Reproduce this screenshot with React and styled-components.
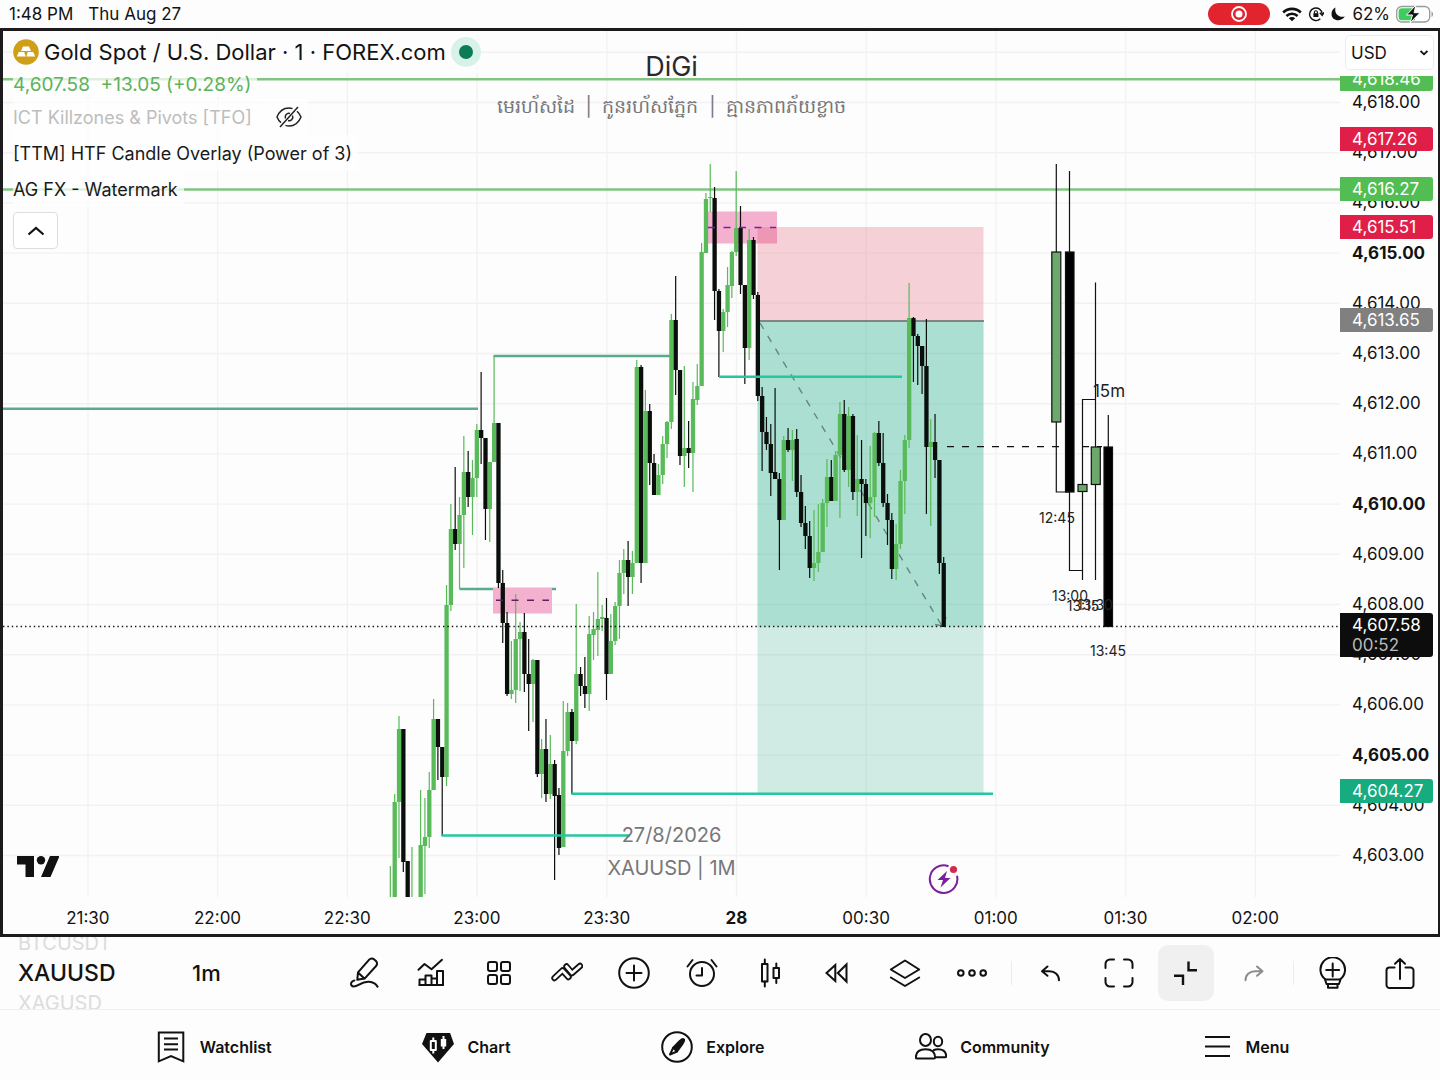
import styled, { createGlobalStyle, css } from "styled-components";

const GlobalStyle = createGlobalStyle`
  * {
    box-sizing: border-box;
  }
  body {
    margin: 0;
    background: #fdfdfd;
    color: #131313;
    font-family: Inter, "Noto Sans", "Liberation Sans", sans-serif;
  }
  button,
  select {
    font: inherit;
    color: inherit;
  }
`;

const UP = "#58ba58";
const DOWN = "#0b0f0c";

// minute from 23:00, high, low, body top, body bottom, direction
const candles = [
  [-20, 866, 897, 897, 897, 1],
  [-19, 794, 897, 802, 897, 1],
  [-18, 716, 858, 729, 802, 1],
  [-17, 729, 872, 729, 862, 0],
  [-16, 861, 897, 861, 897, 0],
  [-15, 847, 897, 897, 897, 1],
  [-13, 790, 897, 845, 897, 1],
  [-12, 798, 894, 837, 846, 1],
  [-11, 772, 848, 790, 837, 1],
  [-10, 699, 790, 719, 790, 1],
  [-9, 719, 780, 719, 747, 0],
  [-8, 747, 836, 747, 777, 0],
  [-7, 585, 786, 605, 777, 1],
  [-6, 504, 611, 529, 605, 1],
  [-5, 467, 550, 529, 544, 0],
  [-4, 497, 589, 515, 544, 1],
  [-3, 436, 568, 472, 515, 1],
  [-2, 451, 507, 472, 497, 0],
  [-1, 460, 535, 478, 497, 1],
  [0, 424, 497, 430, 478, 1],
  [1, 372, 464, 430, 438, 0],
  [2, 438, 540, 438, 509, 0],
  [3, 462, 542, 462, 509, 1],
  [4, 356, 462, 423, 462, 1],
  [5, 423, 588, 423, 583, 0],
  [6, 570, 643, 583, 623, 0],
  [7, 612, 696, 623, 694, 0],
  [8, 641, 699, 690, 694, 1],
  [9, 594, 703, 639, 690, 1],
  [10, 622, 691, 632, 639, 1],
  [11, 613, 692, 632, 674, 0],
  [12, 639, 731, 674, 684, 0],
  [13, 659, 722, 660, 684, 1],
  [14, 660, 777, 660, 774, 0],
  [15, 739, 798, 749, 774, 1],
  [16, 719, 802, 749, 794, 0],
  [17, 735, 799, 764, 794, 1],
  [18, 760, 880, 764, 796, 0],
  [19, 788, 855, 795, 848, 0],
  [20, 701, 847, 751, 847, 1],
  [21, 703, 756, 712, 751, 1],
  [22, 709, 794, 712, 741, 0],
  [23, 604, 744, 674, 741, 1],
  [24, 667, 696, 674, 686, 0],
  [25, 657, 708, 686, 694, 0],
  [26, 616, 711, 634, 694, 1],
  [27, 612, 660, 629, 635, 1],
  [28, 572, 656, 619, 630, 1],
  [29, 605, 631, 617, 619, 1],
  [30, 598, 700, 618, 674, 0],
  [31, 614, 674, 641, 674, 1],
  [32, 602, 645, 606, 641, 1],
  [33, 560, 639, 573, 606, 1],
  [34, 549, 594, 560, 573, 1],
  [35, 541, 606, 560, 577, 0],
  [36, 551, 594, 563, 577, 1],
  [37, 360, 563, 367, 563, 1],
  [38, 365, 583, 367, 563, 0],
  [39, 390, 563, 411, 563, 1],
  [40, 404, 485, 411, 463, 0],
  [41, 454, 495, 463, 495, 0],
  [42, 464, 495, 475, 495, 1],
  [43, 436, 484, 444, 475, 1],
  [44, 421, 458, 422, 444, 1],
  [45, 314, 429, 320, 422, 1],
  [46, 276, 395, 320, 370, 0],
  [47, 370, 465, 370, 456, 0],
  [48, 366, 487, 448, 456, 1],
  [49, 421, 468, 448, 453, 0],
  [50, 382, 492, 399, 453, 1],
  [51, 364, 405, 386, 400, 1],
  [52, 243, 386, 252, 386, 1],
  [53, 193, 253, 199, 253, 1],
  [54, 164, 212, 197, 198, 1],
  [55, 187, 320, 198, 291, 0],
  [56, 289, 377, 291, 331, 0],
  [57, 309, 352, 312, 331, 1],
  [58, 267, 327, 285, 312, 1],
  [59, 251, 298, 252, 286, 1],
  [60, 171, 256, 228, 252, 1],
  [61, 206, 294, 228, 285, 0],
  [62, 285, 384, 285, 348, 0],
  [63, 229, 360, 240, 348, 1],
  [64, 237, 299, 240, 295, 0],
  [65, 292, 401, 295, 396, 0],
  [66, 387, 471, 396, 432, 0],
  [67, 417, 450, 432, 444, 0],
  [68, 424, 496, 444, 473, 0],
  [69, 388, 479, 472, 479, 0],
  [70, 473, 570, 479, 520, 0],
  [71, 436, 520, 440, 520, 1],
  [72, 428, 452, 440, 450, 0],
  [73, 430, 481, 440, 450, 1],
  [74, 429, 497, 439, 492, 0],
  [75, 475, 527, 492, 523, 0],
  [76, 506, 549, 523, 536, 0],
  [77, 521, 578, 536, 568, 0],
  [78, 510, 581, 563, 568, 1],
  [79, 504, 572, 552, 563, 1],
  [80, 499, 552, 503, 552, 1],
  [81, 459, 527, 477, 503, 1],
  [82, 460, 501, 477, 501, 0],
  [83, 451, 501, 455, 501, 1],
  [84, 402, 518, 414, 455, 1],
  [85, 400, 472, 414, 470, 0],
  [86, 407, 487, 416, 470, 1],
  [87, 414, 500, 416, 492, 0],
  [88, 435, 516, 479, 492, 1],
  [89, 440, 558, 479, 484, 0],
  [90, 479, 536, 484, 503, 0],
  [91, 446, 538, 497, 503, 1],
  [92, 432, 517, 433, 497, 1],
  [93, 421, 466, 433, 463, 0],
  [94, 433, 507, 463, 503, 0],
  [95, 494, 545, 503, 520, 0],
  [96, 513, 579, 520, 569, 0],
  [97, 524, 580, 544, 569, 1],
  [98, 470, 549, 481, 544, 1],
  [99, 435, 514, 440, 481, 1],
  [100, 283, 448, 318, 440, 1],
  [101, 317, 382, 318, 336, 0],
  [102, 334, 385, 336, 346, 0],
  [103, 346, 394, 346, 366, 0],
  [104, 319, 514, 366, 447, 0],
  [105, 419, 526, 442, 447, 1],
  [106, 414, 478, 442, 460, 0],
  [107, 460, 574, 460, 563, 0],
  [108, 557, 627, 563, 627, 0],
];

const prices = Array.from({ length: 16 }, (_, i) => 4618 - i);
const times = ["21:30", "22:00", "22:30", "23:00", "23:30", "28", "00:30", "01:00", "01:30", "02:00"];

const tags = [
  { price: 4618.46, color: "#52bd52" },
  { price: 4617.26, color: "#e01f48" },
  { price: 4616.27, color: "#52bd52" },
  { price: 4615.51, color: "#e01f48" },
  { price: 4613.65, color: "#808080" },
  { price: 4607.58, color: "#0d0d0d", countdown: "00:52" },
  { price: 4604.27, color: "#17ab80" },
];

const htfLabels = [
  { text: "12:45", x: 1057, y: 517 },
  { text: "13:00", x: 1070, y: 595 },
  { text: "13:15", x: 1083, y: 605 },
  { text: "13:30", x: 1095, y: 604 },
  { text: "13:45", x: 1108, y: 650 },
];

// drawing area, in the units of the chart svg
const PLOT = { x: 3, y: 31, w: 1337, h: 866 };

const fmt = (n) => n.toLocaleString("en-US", { minimumFractionDigits: 2, maximumFractionDigits: 2 });
const priceY = (p) => 102.5 + (4618 - p) * 50.2;
const minuteX = (m) => 476.8 + m * 4.323;
const leftOf = (x) => `${((x - PLOT.x) / PLOT.w) * 100}%`;
const topOf = (y) => `${((y - PLOT.y) / PLOT.h) * 100}%`;

const Icon = ({ children, size = 32, width = 2 }) => (
  <svg
    width={size}
    height={size}
    viewBox="0 0 32 32"
    fill="none"
    stroke="currentColor"
    strokeWidth={width}
    strokeLinecap="round"
    strokeLinejoin="round"
    aria-hidden="true"
  >
    {children}
  </svg>
);

const tools = [
  {
    label: "Draw",
    icon: (
      <>
        <path d="M9.3 22.8 10 15.4 21.2 2.6a3.5 3.5 0 0 1 5-.2l1.800 1.700a3.500 3.500 0 0 1 .1 4.900L16.600 21.600z M10 15.600l6.400 6" />
        <path d="M6.400 23.400C3.400 24 2.400 26.600 3.500 28.400c1.200 1.800 4.400 1 7.500-.8 6.500-3.800 14.500-4.200 18.500 2" />
      </>
    ),
  },
  {
    label: "Indicators",
    icon: (
      <>
        <path d="M3.5 12.800 9.500 7l7 5.200L27 2.800" />
        <path d="M4.500 28v-5.500h6V28M10.500 28v-9.500h6V28M16.500 21.500h5.500V28M22 28V14h6v14z" />
        <path d="M4.500 28H28" />
      </>
    ),
  },
  {
    label: "Layouts",
    icon: (
      <>
        <rect x="5" y="5" width="9" height="9" rx="2" />
        <rect x="18" y="5" width="9" height="9" rx="2" />
        <rect x="5" y="18" width="9" height="9" rx="2" />
        <rect x="18" y="18" width="9" height="9" rx="2" />
      </>
    ),
  },
  {
    label: "Patterns",
    icon: (
      <>
        <path d="M3.500 21 11.500 13.500 17.500 20" strokeWidth="6.400" />
        <path d="M3.500 21 11.500 13.500 17.500 20" strokeWidth="2.800" stroke="#fdfdfd" />
        <path d="M15.500 9.500 21 16 29 9" strokeWidth="6.400" />
        <path d="M15.500 9.500 21 16 29 9" strokeWidth="2.800" stroke="#fdfdfd" />
      </>
    ),
  },
  {
    label: "Add",
    icon: (
      <>
        <circle cx="16" cy="16" r="14.800" />
        <path d="M16 8.500v15M8.500 16h15" />
      </>
    ),
  },
  {
    label: "Alert",
    icon: (
      <>
        <circle cx="16" cy="17" r="12" />
        <path d="M16 11v7.500h-5.500M1.500 9.500l5-6.500M30.500 9.500l-5-6.500" />
      </>
    ),
  },
  {
    label: "Chart type",
    icon: (
      <>
        <rect x="8" y="7" width="5.500" height="17.500" />
        <path d="M10.800 2.500V7M10.800 24.500v5M22.300 6.500V11M22.300 21v5" />
        <rect x="19.500" y="11" width="5.500" height="10" />
      </>
    ),
  },
  {
    label: "Replay",
    icon: <path d="M5.500 16 14.300 8v16zM16.800 16l8.700-8.500v17z" strokeLinejoin="miter" />,
  },
  {
    label: "Object tree",
    icon: <path d="M1.800 12.500 16 3.500l14.200 9L16 21zM1.800 20.500l14.200 8.500 14.200-8.500" />,
  },
  {
    label: "More",
    icon: (
      <>
        <circle cx="4.800" cy="16" r="2.800" />
        <circle cx="16" cy="16" r="2.800" />
        <circle cx="27.200" cy="16" r="2.800" />
      </>
    ),
  },
];

const viewTools = [
  { label: "Undo", icon: <path d="M12.500 9.500 7 14.200l5.500 4.600M7 14.200h7.500c5.500 0 9.500 3.600 9.500 9" /> },
  {
    label: "Fullscreen",
    icon: <path d="M2.500 11V7a4.500 4.500 0 0 1 4.500-4.500h4M21 2.500h4A4.500 4.500 0 0 1 29.500 7v4M29.500 21v4a4.500 4.500 0 0 1-4.500 4.500h-4M11 29.500H7A4.500 4.500 0 0 1 2.500 25v-4" />,
  },
  {
    label: "Exit focus",
    active: true,
    icon: <path d="M18.500 4.500v8.700H27M4 18.800h9V28" strokeLinecap="butt" strokeLinejoin="miter" strokeWidth="2.400" />,
  },
  {
    label: "Redo",
    muted: true,
    icon: <path d="M19 9.500 24.500 14.200l-5.500 4.600M24.500 14.200H17c-5.500 0-9.500 3.600-9.500 9" />,
  },
];

const shareTools = [
  {
    label: "Publish idea",
    icon: (
      <>
        <path d="M8.500 22.500a12.300 12.300 0 1 1 14.500 0M15.700 6.500v13M9.200 13h13" />
        <path d="M8 22.500h15.500l-1.500 4.500H9.500zM11 27h9.500v3.800H11z" />
      </>
    ),
  },
  {
    label: "Share",
    icon: <path d="M10.500 10.500h-5a3 3 0 0 0-3 3V28a3 3 0 0 0 3 3h21a3 3 0 0 0 3-3V13.500a3 3 0 0 0-3-3h-5M16 22V2M11 6.800 16 2l5 4.800" />,
  },
];

const tabs = [
  {
    label: "Watchlist",
    icon: (
      <>
        <path d="M3.800 1.500h24.500v28.800L16 25 3.800 30.300z" strokeLinejoin="miter" />
        <path d="M9 7.500h14M9 13.300h14M9 18.500h14" strokeLinecap="butt" />
      </>
    ),
  },
  {
    label: "Chart",
    icon: (
      <>
        <path d="M4.500 2h23.600L32 13 16 31.500 0 13z" fill="currentColor" stroke="none" />
        <path d="M8.800 10h5v9h-5zM11.300 6.500V10M11.300 19v3.500M21.500 5v13" stroke="#fff" strokeLinecap="butt" />
        <path d="M18.800 8h5.400v7.500h-5.400z" fill="#fff" stroke="none" />
      </>
    ),
  },
  {
    label: "Explore",
    icon: (
      <>
        <circle cx="16" cy="16" r="14.800" />
        <path d="M22.800 8.300c.8.600.6 1.500-1 4L16 20.500l-3.800-3.800 6.300-6.500c2.200-2 3.500-2.500 4.300-1.900z" fill="currentColor" />
        <path d="M12.200 16.700 9 23.500 16 20.500" />
      </>
    ),
  },
  {
    label: "Community",
    icon: (
      <>
        <ellipse cx="10.500" cy="9" rx="5.500" ry="6" />
        <ellipse cx="23" cy="10.500" rx="4.200" ry="4.800" />
        <path d="M.8 26.300C1 21 4.500 18.300 10.500 18.300S20 21 20.200 26.300c0 .8-.5 1.200-1.200 1.200H2c-.7 0-1.200-.4-1.200-1.200zM19 19c1.200-.5 2.500-.7 4-.7 5 0 8 2.500 8.200 6.800 0 .8-.4 1.200-1.200 1.200h-9.500" />
      </>
    ),
  },
  { label: "Menu", icon: <path d="M5 6h25M5 15.500h25M5 25h25" strokeLinecap="butt" /> },
];

const Candle = ({ data: [m, high, low, top, bottom, up] }) => {
  const x = minuteX(m);
  const color = up ? UP : DOWN;
  return (
    <g fill={color}>
      <rect x={x - 0.6} y={high} width="1.2" height={low - high} />
      {top < PLOT.y + PLOT.h && <rect x={x - 2.1} y={top} width="4.3" height={bottom - top} />}
    </g>
  );
};

const ChartDrawing = () => (
  <Drawing viewBox={`${PLOT.x} ${PLOT.y} ${PLOT.w} ${PLOT.h}`} preserveAspectRatio="none" aria-label="XAUUSD price chart">
    <g stroke="#f2f2f3" strokeWidth="1.400">
      {times.map((t, i) => (
        <line key={t} x1={88 + i * 129.7} x2={88 + i * 129.7} y1="31" y2="897" />
      ))}
      {[4619, ...prices].map((p) => (
        <line key={p} x1="3" x2="1340" y1={priceY(p)} y2={priceY(p)} />
      ))}
    </g>

    {/* order blocks */}
    <rect x="706" y="211.500" width="71" height="32" fill="#f4b0cf" />
    <rect x="493" y="588" width="59" height="25.500" fill="#f4b0cf" />

    {/* short position */}
    <rect x="757.500" y="227" width="226" height="94" fill="rgba(223,71,95,.24)" />
    <rect x="757.500" y="321" width="226" height="473" fill="rgba(8,162,118,.19)" />
    <rect x="757.500" y="321" width="226" height="305.500" fill="rgba(8,172,126,.18)" />
    <line x1="757" x2="984" y1="321" y2="321" stroke="#5f6b68" strokeWidth="1.300" />
    <path d="M760 323 942 626" stroke="#66867c" strokeWidth="1.400" strokeDasharray="7 8" fill="none" />
    <path d="M935 624.500 943 626 946 617" stroke="#66867c" strokeWidth="1.400" fill="none" />

    <line x1="3" x2="1340" y1="79.300" y2="79.300" stroke="#82c482" strokeWidth="2.600" />
    <line x1="3" x2="1340" y1="189.500" y2="189.500" stroke="#82c482" strokeWidth="2.600" />
    <g stroke="#58ab8c" strokeWidth="2.500">
      <line x1="3" x2="478" y1="408.700" y2="408.700" />
      <line x1="493.500" x2="671" y1="356" y2="356" />
      <line x1="459.500" x2="556" y1="589" y2="589" />
    </g>
    <rect x="493" y="588" width="59" height="3" fill="#f4b0cf" />

    {candles.map((c) => (
      <Candle key={c[0]} data={c} />
    ))}

    <g stroke="#25c6a0" strokeWidth="2.600">
      <line x1="719" x2="902" y1="376.700" y2="376.700" />
      <line x1="571.500" x2="993" y1="793.700" y2="793.700" />
      <line x1="441.500" x2="630" y1="835.500" y2="835.500" />
    </g>
    <g stroke="#7a1fa0" strokeWidth="1.600" strokeDasharray="7 8.500">
      <line x1="708" x2="776" y1="227.500" y2="227.500" />
      <line x1="496" x2="549" y1="600.300" y2="600.300" stroke="#5d2358" />
    </g>

    {/* 15m candles */}
    <g stroke="#111" strokeWidth="1.200" fill="none">
      <line x1="947" x2="1102" y1="446.700" y2="446.700" strokeDasharray="7 8" />
      <path d="M1056.300 164V252M1056.300 422v70h13M1069.500 171V252M1069.500 492v78.500h13" />
      <path d="M1095.500 399.500h-13V580M1095.500 282.500V580M1108.300 415v32" />
      <rect x="1051.800" y="252" width="9" height="170" fill="#6ca76c" />
      <rect x="1065.500" y="252" width="8.500" height="240" fill="#000" />
      <rect x="1078" y="484.500" width="9" height="7" fill="#6ca76c" />
      <rect x="1091.300" y="447" width="9" height="37.500" fill="#6ca76c" />
      <rect x="1104" y="447" width="8.500" height="179.500" fill="#000" />
    </g>
    <line x1="3" x2="1340" y1="626.500" y2="626.500" stroke="#111" strokeWidth="1.400" strokeDasharray="1.400 3" />
  </Drawing>
);

const StatusIcons = () => (
  <StatusGroup>
    <RecordPill>
      <svg width="18" height="18" viewBox="0 0 18 18" fill="none" aria-hidden="true">
        <circle cx="9" cy="9" r="7" stroke="#fff" strokeWidth="1.800" />
        <circle cx="9" cy="9" r="3.500" fill="#fff" />
      </svg>
    </RecordPill>
    <svg width="20" height="15" viewBox="0 0 20 15" fill="none" stroke="#111" strokeWidth="2.600" aria-hidden="true">
      <path d="M1.200 5.500a12.500 12.500 0 0 1 17.600 0M4.400 9a8 8 0 0 1 11.200 0" />
      <path d="M10 14.300 6.800 11.200a4.600 4.600 0 0 1 6.400 0z" fill="#111" stroke="none" />
    </svg>
    <svg width="16" height="16" viewBox="0 0 16 16" fill="none" stroke="#111" strokeWidth="1.400" aria-hidden="true">
      <path d="M12.300 12.800A6.300 6.300 0 1 1 14.200 8" />
      <path d="M11.800 6.800 14.200 9.300 16 6.300" />
      <rect x="5.400" y="7.200" width="5" height="3.800" fill="#111" stroke="none" />
      <path d="M6.400 7.500V6.200a1.500 1.500 0 0 1 3 0v1.300" strokeWidth="1.100" />
    </svg>
    <svg width="16" height="16" viewBox="0 0 16 16" fill="#111" aria-hidden="true">
      <path d="M5.500 1.500C4 7.500 8.500 12 14.800 10.500 11 16.500 1.500 15 1.500 8c0-3 1.600-5.400 4-6.500z" />
    </svg>
    <span>62%</span>
    <svg width="38" height="18" viewBox="0 0 38 18" aria-hidden="true">
      <rect x=".7" y="1.500" width="33" height="15.500" rx="5" fill="#fff" stroke="#9a9a9a" strokeWidth="1.300" />
      <path d="M6 3.300h13v12H6a3.400 3.400 0 0 1-3.400-3.400V6.700A3.400 3.400 0 0 1 6 3.300z" fill="#3ecb5f" />
      <path d="M35.500 6.500c2 .8 2 4.700 0 5.500z" fill="#9a9a9a" />
      <path d="M20 0 10.500 10h6L14 18 24 7.700h-6z" fill="#111" stroke="#fff" strokeWidth="1" />
    </svg>
  </StatusGroup>
);

const Tools = ({ items }) =>
  items.map((t) => (
    <ToolSlot key={t.label}>
      <ToolButton aria-label={t.label} $active={t.active} $muted={t.muted}>
        <Icon>{t.icon}</Icon>
      </ToolButton>
    </ToolSlot>
  ));

const App = () => {
  return (
    <Page>
      <GlobalStyle />
      <StatusBar>
        <StatusGroup $wide>
          <span>1:48 PM</span>
          <span>Thu Aug 27</span>
        </StatusGroup>
        <StatusIcons />
      </StatusBar>

      <ChartFrame>
        <Plot>
          <ChartDrawing />
          <Watermark>
            <strong>DiGi</strong>
            <span>មេរហ័សដៃ&nbsp; |&nbsp; កូនរហ័សភ្នែក&nbsp; |&nbsp; គ្មានភាពភ័យខ្លាច</span>
          </Watermark>
          <Watermark $bottom>
            <span>27/8/2026</span>
            <span>XAUUSD | 1M</span>
          </Watermark>
          {htfLabels.map((l) => (
            <HtfLabel key={l.text} style={{ left: leftOf(l.x), top: topOf(l.y) }}>
              {l.text}
            </HtfLabel>
          ))}
          <HtfLabel $large style={{ left: leftOf(1109), top: topOf(391) }}>
            15m
          </HtfLabel>

          <Legend>
            <TitleRow>
              <svg width="26" height="26" viewBox="0 0 26 26" aria-hidden="true">
                <circle cx="13" cy="13" r="12.800" fill="#cf9f18" />
                <path
                  d="M10 7.500h6l2 4.500H8zM5.800 13h5.400l1.500 4.500H3.800zM14.800 13h5.400l2 4.500h-8.900z"
                  fill="#fff"
                />
              </svg>
              <h1>Gold Spot / U.S. Dollar · 1 · FOREX.com</h1>
              <MarketDot />
            </TitleRow>
            <PriceRow>
              <span>4,607.58&nbsp; +13.05 (+0.28%)</span>
            </PriceRow>
            <StudyRow $muted>
              <span>ICT Killzones &amp; Pivots [TFO]</span>
              <svg width="26" height="22" viewBox="0 0 26 22" fill="none" stroke="#222" strokeWidth="1.500" aria-hidden="true">
                <path d="M16.500 2.600A12 12 0 0 0 13 2C7 2 3 6 1 11c.9 2.200 2.200 4.200 4 5.700M9.500 19.400c1.100.4 2.300.6 3.500.6 6 0 10-4 12-9-.9-2.200-2.300-4.300-4-5.800" />
                <path d="M4 21 22 1M9.500 12.500a3.700 3.700 0 0 1 4.500-5M16.500 9.500a3.700 3.700 0 0 1-4.500 5" />
              </svg>
            </StudyRow>
            <StudyRow>
              <span>[TTM] HTF Candle Overlay (Power of 3)</span>
            </StudyRow>
            <StudyRow>
              <span>AG FX - Watermark</span>
            </StudyRow>
            <CollapseButton aria-label="Hide indicator legend">
              <svg width="18" height="10" viewBox="0 0 18 10" fill="none" stroke="#111" strokeWidth="2.200" aria-hidden="true">
                <path d="M1.500 8.500 9 2l7.500 6.500" />
              </svg>
            </CollapseButton>
          </Legend>

          <Logo width="42" height="21" viewBox="0 0 42 21" aria-label="TradingView">
            <path d="M0 0h17v21H8.500V8.500H0zM33 0h9.500L33.500 21H24z" />
            <circle cx="24" cy="4.200" r="4.200" />
          </Logo>
          <EventButton aria-label="Upcoming event" style={{ left: leftOf(minuteX(108)) }}>
            <svg width="32" height="32" viewBox="0 0 32 32" fill="none" aria-hidden="true">
              <path d="M20.500 3.200A13.800 13.800 0 1 0 29 12.800" stroke="#7b1f9c" strokeWidth="2" />
              <path d="M19 8 9.500 17H15l-2.500 7.500L22.500 15H17z" fill="#7b1f9c" />
              <circle cx="25.500" cy="6.500" r="3.600" fill="#d02b4b" />
            </svg>
          </EventButton>
        </Plot>

        <PriceAxis>
          <CurrencyBox>
            <select aria-label="Currency" defaultValue="USD">
              <option>USD</option>
              <option>EUR</option>
            </select>
            <svg width="8" height="6" viewBox="0 0 8 6" fill="none" stroke="#111" strokeWidth="1.800" aria-hidden="true">
              <path d="M.6 1 4 4.300 7.400 1" />
            </svg>
          </CurrencyBox>
          <Scale>
            <ScaleInner>
              {prices.map((p) => (
                <Tick key={p} $bold={p % 5 === 0}>
                  {fmt(p)}
                </Tick>
              ))}
              {tags.map((t) => (
                <PriceTag key={t.price} $color={t.color} style={{ top: `${((4618.5 - t.price) / 16) * 100}%` }}>
                  {fmt(t.price)}
                  {t.countdown && <small>{t.countdown}</small>}
                </PriceTag>
              ))}
            </ScaleInner>
          </Scale>
        </PriceAxis>

        <TimeAxis>
          {times.map((t) => (
            <TimeTick key={t} $bold={t === "28"}>
              {t}
            </TimeTick>
          ))}
        </TimeAxis>
      </ChartFrame>

      <Toolbar>
        <SymbolWheel>
          <span>BTCUSDT</span>
          <strong>XAUUSD</strong>
          <span>XAGUSD</span>
        </SymbolWheel>
        <Interval>1m</Interval>
        <Tools items={tools} />
        <Separator />
        <Tools items={viewTools} />
        <Separator />
        <Tools items={shareTools} />
      </Toolbar>

      <TabBar>
        {tabs.map((t) => (
          <Tab key={t.label} href={`#${t.label.toLowerCase()}`}>
            <Icon>{t.icon}</Icon>
            {t.label}
          </Tab>
        ))}
      </TabBar>
    </Page>
  );
};

const Page = styled.div`
  display: flex;
  flex-direction: column;
  height: 100vh;
  min-height: 640px;
  background: #fdfdfd;
`;

const StatusBar = styled.header`
  display: flex;
  flex: none;
  justify-content: space-between;
  align-items: center;
  height: 28px;
  padding: 0 6px 0 9px;
  font-size: 17px;
`;

const StatusGroup = styled.div`
  display: flex;
  align-items: center;
  gap: ${(props) => (props.$wide ? "15px" : "6px")};
`;

const RecordPill = styled.div`
  display: flex;
  justify-content: center;
  align-items: center;
  width: 62px;
  height: 22px;
  margin-right: 6px;
  border-radius: 11px;
  background: #e2242f;
`;

const ChartFrame = styled.main`
  display: grid;
  flex: 1;
  grid-template-columns: 1fr 98px;
  grid-template-rows: 1fr 37px;
  min-height: 0;
  border: 3px solid #1d1b1e;
  border-right-width: 2px;
`;

const Plot = styled.section`
  position: relative;
  min-width: 0;
  min-height: 0;
  overflow: hidden;
`;

const Drawing = styled.svg`
  position: absolute;
  inset: 0;
  width: 100%;
  height: 100%;
`;

const Watermark = styled.div`
  position: absolute;
  left: 0;
  right: 0;
  display: flex;
  flex-direction: column;
  align-items: center;
  color: #77777a;
  font-size: 20px;
  line-height: 33px;
  ${(props) =>
    props.$bottom
      ? css`
          bottom: 12px;
        `
      : css`
          top: 16px;
          font-size: 19px;
          line-height: 40px;
        `}
  strong {
    color: #2a2a2e;
    font-size: 27px;
    font-weight: 400;
  }
`;

const HtfLabel = styled.span`
  position: absolute;
  transform: translate(-50%, -50%);
  color: #222;
  font-size: ${(props) => (props.$large ? "17px" : "14px")};
`;

const Legend = styled.div`
  position: relative;
  display: flex;
  flex-direction: column;
  align-items: flex-start;
  padding-left: 10px;
`;

const TitleRow = styled.div`
  display: flex;
  align-items: center;
  height: 42px;
  gap: 5px;
  background: rgba(253, 253, 253, 0.8);
  h1 {
    margin: 0;
    font-size: 22px;
    font-weight: 400;
  }
`;

const MarketDot = styled.i`
  width: 30px;
  height: 30px;
  border: 8px solid #d9f2e9;
  border-radius: 50%;
  background: #0d7a58;
`;

const PriceRow = styled.div`
  height: 24px;
  margin-bottom: 2px;
  padding-right: 6px;
  background: rgba(253, 253, 253, 0.75);
  color: #5bb35b;
  font-size: 19px;
  line-height: 24px;
`;

const StudyRow = styled.div`
  display: flex;
  align-items: center;
  gap: 24px;
  height: 36px;
  padding-right: 6px;
  background: rgba(253, 253, 253, 0.75);
  color: ${(props) => (props.$muted ? "#bdbdbd" : "#1a1a1a")};
  font-size: 18px;
`;

const CollapseButton = styled.button`
  display: flex;
  justify-content: center;
  align-items: center;
  width: 45px;
  height: 37px;
  margin-top: 5px;
  border: 1px solid #dcdde2;
  border-radius: 4px;
  background: #fff;
`;

const Logo = styled.svg`
  position: absolute;
  left: 14px;
  bottom: 20px;
  fill: #111;
`;

const EventButton = styled.button`
  position: absolute;
  bottom: 2px;
  width: 32px;
  height: 32px;
  margin-left: -16px;
  padding: 0;
  border: none;
  background: none;
`;

const PriceAxis = styled.aside`
  display: flex;
  flex-direction: column;
  min-height: 0;
`;

const CurrencyBox = styled.div`
  display: flex;
  flex: none;
  align-items: center;
  height: 35px;
  margin: 4px 4px 6px 5px;
  padding: 0 5px;
  border: 1px solid #ececee;
  border-radius: 5px;
  background: #fff;
  select {
    flex: 1;
    min-width: 0;
    padding: 0;
    border: none;
    appearance: none;
    background: none;
    font-size: 17px;
  }
`;

const Scale = styled.div`
  display: flex;
  flex: 1;
  min-height: 0;
  padding: 1px 5px 17px 0;
  overflow: hidden;
`;

const ScaleInner = styled.div`
  position: relative;
  display: flex;
  flex: 1;
  flex-direction: column;
`;

const Tick = styled.div`
  display: flex;
  flex: 1;
  align-items: center;
  min-height: 0;
  padding-left: 12px;
  font-size: 17px;
  font-weight: ${(props) => (props.$bold ? 700 : 400)};
`;

const PriceTag = styled.div`
  position: absolute;
  left: 0;
  right: 0;
  margin-top: -12px;
  padding: 2px 0 2px 12px;
  border-radius: 0 3px 3px 0;
  background: ${(props) => props.$color};
  color: #fff;
  font-size: 17px;
  line-height: 20px;
  small {
    display: block;
    color: #b9b9b9;
    font-size: 17px;
  }
`;

const TimeAxis = styled.div`
  display: flex;
  align-items: center;
  padding: 0 20px;
`;

const TimeTick = styled.span`
  flex: 1;
  padding-top: 4px;
  font-size: 17px;
  font-weight: ${(props) => (props.$bold ? 700 : 400)};
  text-align: center;
`;

const Toolbar = styled.div`
  display: flex;
  flex: none;
  align-items: center;
  height: 73px;
  padding: 0 6px 0 18px;
  border-bottom: 1px solid #efefef;
`;

const SymbolWheel = styled.div`
  display: flex;
  flex: none;
  flex-direction: column;
  justify-content: center;
  width: 174px;
  height: 72px;
  overflow: hidden;
  line-height: 30px;
  span {
    color: #dcdcdc;
    font-size: 20px;
  }
  strong {
    font-size: 23px;
    font-weight: 500;
  }
`;

const Interval = styled.button`
  flex: none;
  width: 138px;
  padding: 0;
  border: none;
  background: none;
  font-size: 22px;
  font-weight: 500;
  text-align: left;
`;

const ToolSlot = styled.div`
  display: flex;
  flex: 1;
  justify-content: center;
  min-width: 0;
`;

const ToolButton = styled.button`
  display: flex;
  justify-content: center;
  align-items: center;
  width: 56px;
  height: 56px;
  padding: 0;
  border: none;
  border-radius: 10px;
  background: ${(props) => (props.$active ? "#f0f0f0" : "none")};
  color: ${(props) => (props.$muted ? "#8c8c8c" : "#111")};
`;

const Separator = styled.i`
  width: 1px;
  height: 24px;
  margin: 0 5px;
  background: #ececec;
`;

const TabBar = styled.nav`
  display: flex;
  flex: none;
  justify-content: space-evenly;
  align-items: center;
  height: 70px;
  padding: 3px 0 0 4px;
`;

const Tab = styled.a`
  display: flex;
  align-items: center;
  gap: 13px;
  color: #111;
  font-size: 16px;
  font-weight: 600;
  text-decoration: none;
`;

export default App;
